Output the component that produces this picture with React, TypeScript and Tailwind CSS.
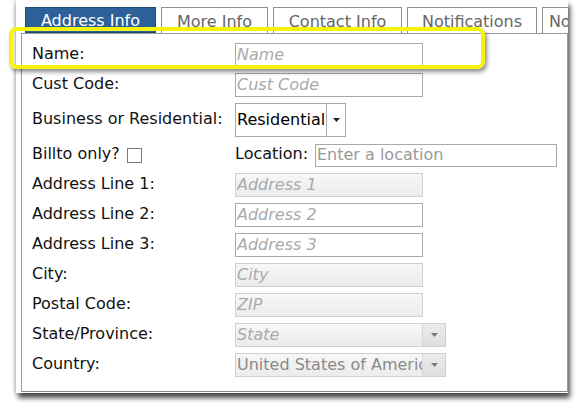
import React from 'react'

const font = { fontFamily: '"DejaVu Sans", Verdana, sans-serif' }

const tabs = ['Address Info', 'More Info', 'Contact Info', 'Notifications', 'Notes']
const tabWidths = ['w-[131px]', 'w-[107px]', 'w-[129px]', 'w-[130px]', 'w-[60px]']

const TextInput = ({ placeholder, disabled }: { placeholder: string; disabled?: boolean }) => (
  <input
    placeholder={placeholder}
    disabled={disabled}
    className={
      'h-[24px] w-[188px] px-[1px] text-[16px] outline-none placeholder:italic placeholder:text-[#aaaaaa] ' +
      (disabled
        ? 'border border-[#cfcfcf] bg-gradient-to-b from-[#f7f7f7] to-[#ececec]'
        : 'border border-[#a9a9a9] bg-white')
    }
  />
)

const DisabledSelect = ({ value, italic }: { value: string; italic?: boolean }) => (
  <div className="flex h-[24px] w-[211px] border border-[#d0d0d0] bg-gradient-to-b from-[#f7f7f7] to-[#ececec]">
    <div
      className={
        'flex-1 overflow-hidden whitespace-nowrap px-[1px] text-[16px] leading-[22px] ' +
        (italic ? 'italic text-[#aaaaaa]' : 'text-[#8a8a8a]')
      }
    >
      {value}
    </div>
    <div className="flex w-[23px] items-center justify-center border-l border-[#d6d6d6] bg-gradient-to-b from-[#ececec] to-[#dedede]">
      <svg width="7" height="4" viewBox="0 0 7 4">
        <path d="M0 0h7L3.5 4z" fill="#7a7a7a" />
      </svg>
    </div>
  </div>
)

const Row = ({ label, children, tall }: { label: React.ReactNode; children: React.ReactNode; tall?: boolean }) => (
  <div className={'flex items-center ' + (tall ? 'h-[40px]' : 'h-[30px]')}>
    <div className="w-[203px] pb-[3px] text-[16px] text-[#111111]">{label}</div>
    {children}
  </div>
)

export default function App() {
  return (
    <div className="h-[408px] w-[587px] bg-white" style={font}>
      <div className="relative ml-[16px] h-[393px] w-[552px] bg-white shadow-[2px_5px_5px_rgba(0,0,0,0.7),-2px_0_3px_rgba(0,0,0,0.15)]">
        {/* tabs */}
        <div className="flex h-[33px] items-end gap-[5px] overflow-hidden pl-[9px] pt-[7px]">
          {tabs.map((t, i) => (
            <div
              key={t}
              className={
                'flex h-[26px] shrink-0 items-center justify-center overflow-hidden whitespace-nowrap pt-[2px] text-[16px] ' +
                tabWidths[i] +
                (i === 0
                  ? ' border border-[#1e4a78] bg-[#2c619a] text-white'
                  : ' border border-b-0 border-[#8f8f8f] bg-white text-[#666666]')
              }
            >
              {t}
            </div>
          ))}
        </div>

        {/* panel */}
        <div className="ml-[5px] h-[359px] border-x border-b border-t border-x-[#9a9a9a] border-b-[#8a8a8a] border-t-[#9a9a9a] pl-[10px] pt-[6px]">
          <Row label="Name:">
            <TextInput placeholder="Name" />
          </Row>
          <Row label="Cust Code:">
            <TextInput placeholder="Cust Code" />
          </Row>
          <Row label="Business or Residential:" tall>
            <div className="flex h-[34px] w-[111px] border border-[#a9a9a9] bg-white">
              <div className="flex-1 px-[1px] text-[16px] leading-[32px] text-black">Residential</div>
              <div className="flex w-[22px] items-center justify-center border-l border-[#a9a9a9]">
                <svg width="7" height="4" viewBox="0 0 7 4">
                  <path d="M0 0h7L3.5 4z" fill="#222222" />
                </svg>
              </div>
            </div>
          </Row>
          <Row
            label={
              <div className="flex items-center gap-[7px]">
                <span>Billto only?</span>
                <span className="mt-[3px] h-[15px] w-[15px] border border-[#7a7a7a] bg-white" />
              </div>
            }
          >
            <span className="w-[80px] pb-[3px] text-[16px] text-[#111111]">Location:</span>
            <input
              placeholder="Enter a location"
              className="h-[23px] w-[242px] border border-[#a9a9a9] bg-white px-[1px] text-[16px] outline-none placeholder:text-[#9a9a9a]"
            />
          </Row>
          <Row label="Address Line 1:">
            <TextInput placeholder="Address 1" disabled />
          </Row>
          <Row label="Address Line 2:">
            <TextInput placeholder="Address 2" />
          </Row>
          <Row label="Address Line 3:">
            <TextInput placeholder="Address 3" />
          </Row>
          <Row label="City:">
            <TextInput placeholder="City" disabled />
          </Row>
          <Row label="Postal Code:">
            <TextInput placeholder="ZIP" disabled />
          </Row>
          <Row label="State/Province:">
            <DisabledSelect value="State" italic />
          </Row>
          <Row label="Country:">
            <DisabledSelect value="United States of America" />
          </Row>
        </div>

        {/* highlight annotation */}
        <div className="absolute left-[-7px] top-[27px] h-[42px] w-[476px] rounded-[8px] border-[4px] border-[#f5f50a] shadow-[2px_3px_4px_rgba(0,0,0,0.45)]" />
      </div>
    </div>
  )
}
